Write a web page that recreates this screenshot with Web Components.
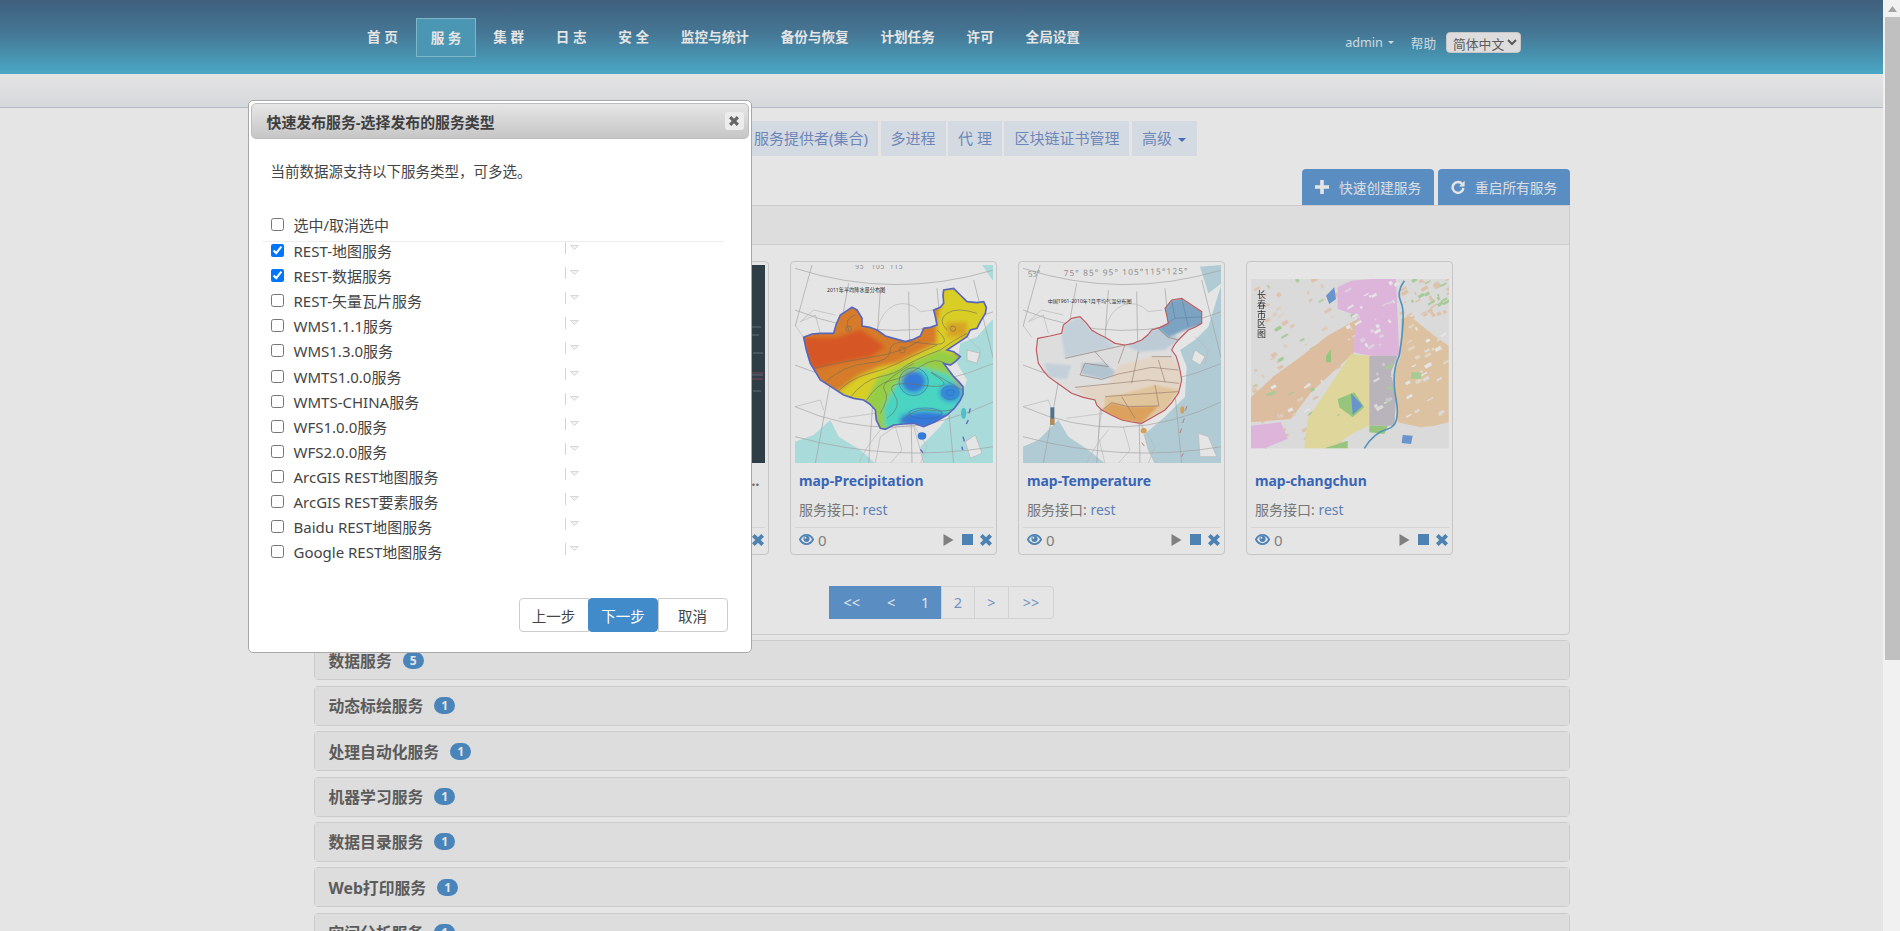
<!DOCTYPE html>
<html lang="zh-CN">
<head>
<meta charset="utf-8">
<title>iServer</title>
<style>
  html, body { margin: 0; height: 931px; overflow: hidden; background: #fff; }
  body { font-family: "Noto Sans", "Noto Sans CJK SC", sans-serif; font-size: 14.5px; }
</style>
</head>
<body>
<ims-app>
  <ims-header></ims-header>
  <ims-subbar></ims-subbar>
  <ims-content>
    <ims-tabs></ims-tabs>
    <ims-toolbar>
      <ims-action icon="plus" label="快速创建服务"></ims-action>
      <ims-action icon="refresh" label="重启所有服务"></ims-action>
    </ims-toolbar>
    <ims-panel open>
      <ims-cards>
        <ims-card iface="rest" hidden-title><ims-map slot="map" kind="dark"></ims-map></ims-card>
        <ims-card name="map-Precipitation" iface="rest"><ims-map slot="map" kind="rain"></ims-map></ims-card>
        <ims-card name="map-Temperature" iface="rest"><ims-map slot="map" kind="temp"></ims-map></ims-card>
        <ims-card name="map-changchun" iface="rest"><ims-map slot="map" kind="city"></ims-map></ims-card>
      </ims-cards>
      <ims-pager></ims-pager>
    </ims-panel>
    <ims-panel name="数据服务" count="5"></ims-panel>
    <ims-panel name="动态标绘服务" count="1"></ims-panel>
    <ims-panel name="处理自动化服务" count="1"></ims-panel>
    <ims-panel name="机器学习服务" count="1"></ims-panel>
    <ims-panel name="数据目录服务" count="1"></ims-panel>
    <ims-panel name="Web打印服务" count="1"></ims-panel>
    <ims-panel name="空间分析服务" count="1"></ims-panel>
  </ims-content>
  <ims-dialog>
    <ims-service-row label="REST-地图服务" checked></ims-service-row>
    <ims-service-row label="REST-数据服务" checked></ims-service-row>
    <ims-service-row label="REST-矢量瓦片服务"></ims-service-row>
    <ims-service-row label="WMS1.1.1服务"></ims-service-row>
    <ims-service-row label="WMS1.3.0服务"></ims-service-row>
    <ims-service-row label="WMTS1.0.0服务"></ims-service-row>
    <ims-service-row label="WMTS-CHINA服务"></ims-service-row>
    <ims-service-row label="WFS1.0.0服务"></ims-service-row>
    <ims-service-row label="WFS2.0.0服务"></ims-service-row>
    <ims-service-row label="ArcGIS REST地图服务"></ims-service-row>
    <ims-service-row label="ArcGIS REST要素服务"></ims-service-row>
    <ims-service-row label="Baidu REST地图服务"></ims-service-row>
    <ims-service-row label="Google REST地图服务"></ims-service-row>
  </ims-dialog>
</ims-app>

<script>
(function () {
  // small helper, every element just sets its shadow html once
  function define(name, render) {
    customElements.define(name, class extends HTMLElement {
      constructor() {
        super();
        this.attachShadow({ mode: "open" });
      }
      connectedCallback() {
        this.shadowRoot.innerHTML = render(this);
      }
    });
  }

  define("ims-app", () => `
    <style>
      :host { display: flex; width: 1900px; height: 931px; overflow: hidden; }
      .main { position: relative; width: 1883px; height: 931px; overflow: hidden; }
      .backdrop { position: absolute; inset: 0; background: rgba(0,0,0,.1); }
      .bar { width: 17px; background: #f1f1f1; display: flex; flex-direction: column; align-items: flex-end; }
      .up { height: 17px; width: 15px; display: flex; align-items: center; justify-content: center; }
      .thumb { width: 15px; height: 643px; background: #c0c0c0; }
    </style>
    <div class="main">
      <slot></slot>
      <div class="backdrop"></div>
      <slot name="top"></slot>
    </div>
    <div class="bar">
      <div class="up"><svg width="9" height="6"><path d="M4.5 0L9 6H0z" fill="#a3a3a3"/></svg></div>
      <div class="thumb"></div>
    </div>
  `);

  define("ims-header", () => {
    const items = ["首 页", "服 务", "集 群", "日 志", "安 全", "监控与统计", "备份与恢复", "计划任务", "许可", "全局设置"];
    return `
    <style>
      :host { display: flex; height: 74px; align-items: center; color: #fff;
        background: linear-gradient(#486a8c 0%, #4d85a6 45%, #52bbdc 100%); }
      nav { display: flex; margin-left: 352px; }
      a { padding: 0 15px; height: 39px; box-sizing: border-box; line-height: 38px; font-size: 13.6px; font-weight: 700;
        white-space: pre; margin-right: 1.8px; }
      a:first-child { margin-right: 3px; }
      a.on { background: #54a9c8; border: 1px solid #8ecae0; padding: 0 14px; }
      .user { margin-left: auto; margin-right: 362px; margin-top: 11px; display: flex; align-items: center; font-size: 12.6px; color: #e4f2f7; }
      .caret { width: 0; height: 0; border: 3px solid transparent; border-top-color: #e4f2f7; border-bottom: 0; margin: 0 0 0 5px; }
      .help { margin-left: 17px; margin-right: 10px; }
      select { width: 75px; height: 21px; font: 12.8px "Noto Sans CJK SC", sans-serif; color: #666; background: #f6f6f6;
        border: 1px solid #ddd; border-radius: 4px; padding: 0 0 0 2px; }
    </style>
    <nav>${items.map((t, i) => `<a class="${i === 1 ? "on" : ""}">${t}</a>`).join("")}</nav>
    <div class="user">admin<span class="caret"></span><span class="help">帮助</span>
      <select><option>简体中文</option></select></div>`;
  });

  define("ims-subbar", () => `
    <style>:host { display: block; height: 33px; border-bottom: 1px solid #ccd0d8;
      background: linear-gradient(#fefefe, #eef1f5); }</style>`);

  define("ims-content", () => `
    <style>:host { display: block; width: 1256px; margin-left: 314px; }</style><slot></slot>`);

  define("ims-tabs", () => {
    const tabs = ["服务提供者(集合)", "多进程", "代 理", "区块链证书管理"];
    return `
    <style>
      :host { display: flex; gap: 2.5px; margin: 13px 0 0 430px; height: 35px; }
      a { background: #edf3fb; color: #7a96cf; font-size: 15px; line-height: 34px; padding: 0 10px; white-space: pre; }
      a:last-child { padding-right: 11px; }
      i { display: inline-block; border: 4px solid transparent; border-top-color: #5177cc; border-bottom: 0; margin-left: 6px; vertical-align: 2px; }
    </style>
    ${tabs.map(t => `<a>${t}</a>`).join("")}<a>高级<i></i></a>`;
  });

  define("ims-toolbar", () => `
    <style>:host { display: flex; justify-content: flex-end; gap: 4px; margin-top: 13px; height: 36px; }</style><slot></slot>`);

  const actionIcons = {
    plus: `<path d="M5.2 0h3.6v5.2H14v3.6H8.8V14H5.2V8.8H0V5.2h5.2z" fill="#fff"/>`,
    refresh: `<path d="M11.2 4A5.4 5.4 0 1 0 12.4 8" fill="none" stroke="#fff" stroke-width="2.4"/><path d="M13.6.8v5.6H8z" fill="#fff"/>`
  };
  define("ims-action", el => `
    <style>
      :host { display: flex; align-items: center; width: 132px; height: 36px; box-sizing: border-box; padding-left: 13px;
        background: #659fd8; border-radius: 4px 4px 0 0; color: #f4f8ff; font-size: 13.7px; }
      svg { margin-right: 10px; flex: none; }
    </style>
    <svg width="14" height="14" viewBox="0 0 14 14">${actionIcons[el.getAttribute("icon")]}</svg>${el.getAttribute("label")}`);

  define("ims-panel", el => {
    const open = el.hasAttribute("open");
    const name = el.getAttribute("name");
    return `
    <style>
      :host { display: block; box-sizing: border-box; border: 1px solid #e2e2e2; border-radius: ${open ? "0 0 4px 4px" : "4px"};
        margin-top: ${open ? 0 : 5.4}px; background: #fff; }
      .head { height: 38px; background: #f6f6f6; display: flex; align-items: center; padding-left: 13.5px;
        font-size: 15.8px; font-weight: 700; color: #666; ${open ? "border-bottom: 1px solid #e6e6e6;" : ""} }
      .badge { margin-left: 11px; width: 21px; height: 17px; border-radius: 8.5px; background: #5295d0; color: #fff;
        font-size: 12px; line-height: 17px; text-align: center; }
    </style>
    <div class="head">${name ? `${name}<span class="badge">${el.getAttribute("count")}</span>` : ""}</div>
    ${open ? "<slot></slot>" : ""}`;
  });

  define("ims-cards", () => `
    <style>:host { display: flex; gap: 21px; padding: 16px 0 0 247px; }</style><slot></slot>`);

  define("ims-card", el => `
    <style>
      :host { display: block; width: 207px; height: 294px; box-sizing: border-box; border: 1px solid #ddd; border-radius: 4px;
        padding: 3px 3.5px 0; background: #fff; color: #848484; font-size: 14px; flex: none; }
      .pic { height: 198px; display: flex; align-items: center; }
      .name { margin: 5.5px 0 0; padding: 0 4.5px; height: 24px; line-height: 24px; font-size: 13.9px; font-weight: 700; color: #4171cc;
        white-space: nowrap; overflow: hidden; }
      .name.dots { text-align: right; color: #777; padding-right: 5px; }
      .iface { margin-top: 5px; padding: 0 4.5px; height: 24px; line-height: 24px; }
      .iface b { font-weight: 400; color: #6a90cc; }
      .foot { margin-top: 5px; border-top: 1px solid #eee; height: 24px; display: flex; align-items: center; padding: 0 1px 0 4.5px; }
      .num { margin-left: 4px; font-size: 15px; color: #909090; }
      .ops { margin-left: auto; display: flex; align-items: center; }
      .ops svg { display: block; }
    </style>
    <div class="pic"><slot name="map"></slot></div>
    <div class="name ${el.hasAttribute("hidden-title") ? "dots" : ""}">${el.getAttribute("name") || "…"}</div>
    <div class="iface">服务接口: <b>${el.getAttribute("iface")}</b></div>
    <div class="foot">
      <svg width="15" height="11" viewBox="0 0 15 11"><path d="M.9 5.500C2.600 2.200 4.800.9 7.500.9s4.900 1.300 6.600 4.600C12.400 8.800 10.200 10.100 7.500 10.100S2.600 8.800.9 5.500z" fill="none" stroke="#5691c7" stroke-width="1.800"/><circle cx="7.500" cy="4.800" r="3.100" fill="#5691c7"/><circle cx="6.400" cy="3.800" r="1" fill="#fff"/></svg>
      <span class="num">0</span>
      <div class="ops">
        <svg width="11" height="12" viewBox="0 0 11 12" style="margin-right:8px"><path d="M.5 0L10.5 6 .5 12z" fill="#8f8f8f"/></svg>
        <svg width="11" height="11" viewBox="0 0 11 11" style="margin-right:6.5px"><path d="M0 0h11v11H0z" fill="#5691c7"/></svg>
        <svg width="12" height="12" viewBox="0 0 14 14"><path d="M0 3.200L3.200 0 7 3.800 10.800 0 14 3.200 10.200 7 14 10.800 10.800 14 7 10.200 3.200 14 0 10.800 3.800 7z" fill="#5691c7"/></svg>
      </div>
    </div>`);

  // outlines are written in the pixel space of a 3x crop of the picture, hence the odd viewBoxes
  const rainEdge = "70,262 95,252 120,250 160,250 168,222 180,195 200,182 215,172 230,180 245,205 245,228 268,232 290,240 315,258 340,265 375,275 400,268 420,258 430,235 450,232 470,225 465,200 460,180 480,172 490,160 488,135 490,120 520,115 540,135 560,155 590,158 610,155 618,172 615,190 600,215 590,235 570,240 560,260 530,280 515,290 500,300 520,305 540,320 525,335 510,345 490,340 505,360 520,380 535,395 548,410 548,432 540,450 522,475 500,495 465,515 430,530 400,520 370,522 340,525 315,538 300,535 288,510 285,480 268,462 250,450 220,445 190,435 155,412 120,390 105,365 90,340 78,300";
  const tempEdge = "88,265 125,258 160,250 165,225 190,205 215,200 235,220 250,240 270,252 290,262 320,280 350,285 375,280 400,270 418,255 430,240 455,232 480,220 475,195 470,175 490,150 520,145 550,165 580,185 580,220 560,232 540,240 525,255 510,270 498,285 490,300 503,318 510,340 516,365 520,390 515,412 510,430 490,458 470,480 435,500 400,520 370,516 340,510 310,496 280,480 265,465 260,450 225,442 190,430 155,405 120,380 105,362 90,340 84,300";
  const graticule = `
    <g fill="none" stroke="#b5b5b5" stroke-width="2">
      <path d="M44 55Q340 150 640 60"/><path d="M44 180Q340 300 640 185"/><path d="M44 345Q340 470 640 340"/><path d="M44 470Q340 600 640 455"/><path d="M44 560Q340 640 640 590"/>
      <path d="M95 45L44 230"/><path d="M205 100L105 640"/><path d="M300 120L265 640"/><path d="M385 125L395 640"/><path d="M470 115L520 640"/><path d="M580 90L640 330"/>
    </g>`;
  const borders = `
    <path d="M290 240Q305 180 345 165T420 185L462 180M44 225L70 262M120 250L105 195 60 215 100 180 165 195M175 505L285 490M44 470L120 450 130 480M300 540Q250 600 235 640M345 530L365 600 330 640M400 525L440 590 420 640M560 260L600 300 590 340" fill="none" stroke="#cfcfcf" stroke-width="2"/>`;

  const maps = {
    dark: () => `<svg viewBox="0 0 198 198"><rect width="198" height="198" fill="#34444f"/>
      <g stroke="#8a949c" stroke-width=".7"><path d="M182 62h12M184 70h8M186 88h10M184 110h12M186 126h8"/></g>
      <path d="M180 108h16M182 114h14" stroke="#a05a5a" stroke-width=".8"/></svg>`,
    rain: () => `<svg viewBox="44 45 594 594">
      <defs>
        <clipPath id="cn"><polygon points="${rainEdge}"/></clipPath>
        <filter id="soft" x="-10%" y="-10%" width="120%" height="120%"><feGaussianBlur stdDeviation="7"/></filter>
      </defs>
      <rect x="44" y="45" width="594" height="594" fill="#fff"/>
      <g fill="#bcf4f2">
        <polygon points="44,640 44,575 100,555 150,510 175,560 240,600 285,640"/>
        <polygon points="540,280 590,260 640,205 640,640 430,640 420,590 470,540 530,470 560,390 530,340"/>
        <polygon points="605,45 640,45 640,95"/>
      </g>
      <g fill="#fff" stroke="#c9c9c9" stroke-width="2">
        <polygon points="285,640 300,560 345,530 400,530 420,600 430,640"/>
        <polygon points="560,300 600,310 590,340 560,330"/><polygon points="555,575 585,555 605,610 570,625"/>
      </g>
      ${borders}
      ${graticule}
      <g clip-path="url(#cn)">
        <g filter="url(#soft)">
          <rect x="44" y="45" width="594" height="594" fill="#ef8a2d"/>
          <polygon points="60,262 170,262 240,238 315,290 270,322 170,340 95,360" fill="#f0602c"/>
          <polygon points="165,432 232,380 300,350 352,340 470,280 470,220 490,105 630,145 630,250 480,330 300,470 250,470" fill="#f2e62c"/>
          <polygon points="498,218 560,215 560,262 500,262" fill="#f0b62c"/>
          <polygon points="258,450 292,382 370,345 480,298 545,320 525,390 555,420 545,470 500,510 430,540 300,545" fill="#a6e650"/>
          <polygon points="312,470 345,405 420,350 500,372 555,420 545,470 500,510 420,540 312,530" fill="#52ecd8"/>
          <ellipse cx="400" cy="395" rx="36" ry="33" fill="#3a88f2"/>
          <ellipse cx="510" cy="428" rx="32" ry="27" fill="#3a98f2"/>
          <ellipse cx="435" cy="510" rx="78" ry="26" fill="#3a88f2"/>
        </g>
        <g fill="none" stroke="#7d7a68" stroke-width="1.800">
          <path d="M100 355Q180 335 270 322T420 272"/>
          <path d="M130 400Q190 345 260 340T330 300 430 280 470 240"/>
          <path d="M165 432Q210 385 262 372T352 340 470 285"/>
          <path d="M210 442Q250 390 300 380T370 352 480 300"/>
          <path d="M258 452Q290 400 330 392T420 350 500 345"/>
          <path d="M300 490Q330 440 312 420T400 340"/>
          <path d="M320 505Q370 470 340 430T420 405 470 380 545 420"/>
          <path d="M360 520Q400 470 450 480T540 470"/>
          <path d="M500 240Q470 210 500 190T590 190M205 240Q190 205 225 195M480 300Q520 270 560 250"/>
          <circle cx="205" cy="236" r="8"/><circle cx="366" cy="300" r="9"/><circle cx="518" cy="236" r="8"/>
          <ellipse cx="400" cy="395" rx="44" ry="42" stroke="#3c78c8"/>
          <ellipse cx="510" cy="428" rx="26" ry="20" stroke="#3c78c8"/>
          <ellipse cx="510" cy="428" rx="12" ry="9" stroke="#3c78c8"/>
          <ellipse cx="435" cy="490" rx="50" ry="16" stroke="#3c78c8"/>
        </g>
      </g>
      <polygon points="${rainEdge}" fill="none" stroke="#6272d4" stroke-width="5"/>
      <ellipse cx="425" cy="558" rx="13" ry="11" fill="#3a88f2"/>
      <ellipse cx="550" cy="490" rx="8" ry="17" fill="#57d6e0"/>
      <path d="M570 475l-4 15M564 510l-6 12M548 560l4 14M420 598l8 10M545 590l2 10" stroke="#6670d6" stroke-width="4"/>
      <text x="140" y="125" font-size="15.5" fill="#333">2011年平均降水量分布图</text>
      <text x="225" y="58" font-size="20" fill="#999" letter-spacing="2" xml:space="preserve">95   105  115</text>
    </svg>`,
    temp: () => `<svg viewBox="44 45 594 594">
      <defs>
        <clipPath id="cnt"><polygon points="${tempEdge}"/></clipPath>
        <filter id="soft2" x="-10%" y="-10%" width="120%" height="120%"><feGaussianBlur stdDeviation="3"/></filter>
      </defs>
      <rect x="44" y="45" width="594" height="594" fill="#fff"/>
      <g fill="#c4e2ed">
        <polygon points="44,640 44,590 90,570 150,510 180,560 240,600 290,640"/>
        <polygon points="515,300 560,270 600,230 640,100 640,640 360,640 400,560 470,500 530,440 535,350"/>
        <polygon points="575,50 640,45 640,100 600,130"/>
      </g>
      <g fill="#fff" stroke="#cfcfcf" stroke-width="2">
        <polygon points="290,640 270,560 280,480 400,525 420,600 440,640"/>
        <polygon points="560,300 590,320 575,345 550,330"/><polygon points="570,550 600,560 625,620 575,620"/>
      </g>
      ${borders}
      ${graticule}
      <g clip-path="url(#cnt)">
        <rect x="44" y="45" width="594" height="594" fill="#f7f7f7"/>
        <g filter="url(#soft2)">
          <polygon points="165,225 215,200 250,240 290,262 320,290 260,305 170,325 160,260" fill="#dbe8f2"/>
          <polygon points="108,340 190,345 175,388 120,382" fill="#dbe8f2"/>
          <polygon points="350,285 430,240 490,230 510,270 470,300 390,305" fill="#d3e3f0"/>
          <polygon points="430,205 490,150 520,145 585,185 585,225 530,240 480,262 450,235" fill="#8cb6da"/>
          <polygon points="220,340 290,340 330,372 280,388 220,372" fill="#c8dbe9"/>
          <polygon points="330,345 430,320 490,320 525,370 512,430 470,480 400,520 280,485 200,412 300,402" fill="#fdeedd"/>
          <polygon points="290,440 340,432 440,405 512,420 470,480 400,520 340,510 285,485" fill="#fadcae"/>
          <polygon points="280,482 310,458 360,470 450,468 400,520 340,512" fill="#f5b468"/>
        </g>
        <g fill="none" stroke="#a0857a" stroke-width="1.800">
          <path d="M170 325L260 305 350 285M260 305L300 350 230 340 215 375 280 388 330 372M330 372L430 352 510 360M200 412L300 402 420 390 512 400"/>
          <path d="M340 440L380 505M440 405L452 470M390 305L370 400M450 330L470 395M290 440L400 432 510 425M450 235L480 262 510 270M350 285L330 340M280 482L310 458 360 470 450 468M430 320L490 320"/>
          <path d="M490 150L500 205 450 235M520 145L540 230M585 200L500 205" stroke="#6c8eb0"/>
        </g>
      </g>
      <polygon points="${tempEdge}" fill="none" stroke="#d4646a" stroke-width="3.500"/>
      <ellipse cx="406" cy="542" rx="9" ry="8" fill="#f0b060"/>
      <ellipse cx="522" cy="480" rx="6" ry="11" fill="#f0b060"/>
      <path d="M536 468l-5 14M528 505l-5 14M520 535l-5 14M400 578l8 10M525 610l-5 10" stroke="#d08a8a" stroke-width="3"/>
      <rect x="126" y="472" width="12" height="52" fill="#5d7f9c"/><rect x="126" y="506" width="12" height="18" fill="#d89a50"/>
      <text x="166" y="76" font-size="25" fill="#a0a0a0" textLength="372" transform="rotate(-1 300 76)">75° 85° 95° 105°115°125°</text>
      <text x="60" y="82" font-size="24" fill="#a0a0a0" transform="rotate(-8 60 82)">53°</text>
      <text x="118" y="160" font-size="15.3" fill="#333">中国1961-2010年1月平均气温分布图</text>
    </svg>`,
    city: () => {
      // speckle so the land-use patches are not flat
      let s = 7;
      const next = m => (s = (s * 73 + 41) % 1009) % m;
      const specks = (count, colors, x, y, w, h) => {
        let out = "";
        for (let i = 0; i < count; i++) {
          const px = x + next(w), py = y + next(h);
          out += `<rect x="${px}" y="${py}" width="${5 + next(18)}" height="${4 + next(8)}" fill="${colors[i % colors.length]}" transform="rotate(-30 ${px} ${py})"/>`;
        }
        return out;
      };
      return `<svg viewBox="60 360 594 508" style="display:block">
      <defs><filter id="soft3"><feGaussianBlur stdDeviation="1.2"/></filter></defs>
      <rect x="60" y="360" width="594" height="508" fill="#f3f3f3"/>
      <g filter="url(#soft3)">
        ${specks(120, ["#f7d9bf", "#f7d9bf", "#f9e2cf", "#b9e2a6"], 60, 362, 300, 500)}
        ${specks(40, ["#f7d9bf", "#f7d9bf", "#b9e2a6"], 500, 362, 150, 120)}
        <polygon points="60,740 60,715 130,650 200,600 290,530 380,480 370,580 240,700 180,780 60,790" fill="#f7d3b2"/>
        <polygon points="510,480 535,470 560,490 610,530 653,560 653,790 610,800 570,805 500,790 490,640 510,590" fill="#f7d9b4"/>
        <polygon points="320,385 360,365 420,360 495,360 505,590 420,590 365,580 380,470 320,450" fill="#f6caf4"/>
        <polygon points="60,800 150,790 170,840 100,868 60,868" fill="#f6caf4"/>
        <polygon points="360,585 415,590 415,800 370,820 300,868 220,868 230,780" fill="#f9efae"/>
        <polygon points="415,590 500,590 480,640 495,720 490,800 415,800" fill="#cfc9d2"/>
        ${specks(30, ["#f8e8f8", "#ffffff"], 340, 370, 150, 200)}
        ${specks(30, ["#ffffff", "#fbeedd", "#f3f3f3"], 520, 500, 125, 280)}
        ${specks(16, ["#f7e6d6", "#ffffff", "#b9e2a6"], 90, 640, 240, 130)}
        ${specks(14, ["#e4e0e6", "#f3f3f3", "#b9e2a6"], 425, 600, 60, 190)}
        <polygon points="320,720 370,700 400,745 365,775 325,745" fill="#a9dc8c"/>
        <polygon points="360,702 395,740 365,768" fill="#74a6e4"/>
        <polygon points="285,410 310,385 315,420 295,435" fill="#74a6e4"/>
        <polygon points="515,828 545,830 540,855 512,852" fill="#74a6e4"/>
        <polygon points="285,590 300,570 300,610 285,610" fill="#a9dc8c"/>
        <polygon points="415,800 470,800 460,825 415,820" fill="#a9dc8c"/>
        <polygon points="540,640 570,640 570,660 540,660" fill="#b9e2a6"/>
        <polygon points="280,868 350,845 350,868" fill="#a9dc8c"/>
        <path d="M520 365Q495 400 510 430T505 590Q480 640 495 720T470 810 400 868" fill="none" stroke="#5fa4cc" stroke-width="5"/>
      </g>
      <text x="78 78 78 78 78" y="418 447 476 505 534" font-size="27" fill="#333">长春市区图</text>
    </svg>`;
    }
  };

  define("ims-map", el => `
    <style>:host { display: block; width: 198px; } svg { display: block; width: 198px; }</style>${maps[el.getAttribute("kind")]()}`);

  define("ims-pager", () => {
    const items = [["<<", 45], ["<", 36], ["1", 34], ["2", 33.5], [">", 35.5], [">>", 45.5]];
    return `
    <style>
      :host { display: flex; justify-content: center; margin-top: 31px; padding-bottom: 15px; }
      a { box-sizing: border-box; height: 33px; line-height: 31px; text-align: center; border: 1px solid #eaeaea; margin-left: -1px;
        color: #7fa4d4; font-size: 14.5px; background: #fff; }
      a.on { background: #659fd8; color: #fff; border-color: #659fd8; }
      a:first-child { border-radius: 4px 0 0 4px; }
      a:last-child { border-radius: 0 4px 4px 0; }
    </style>
    ${items.map((t, i) => `<a class="${i < 3 ? "on" : ""}" style="width:${t[1]}px">${t[0].replace(/</g, "&lt;").replace(/>/g, "&gt;")}</a>`).join("")}`;
  });

  define("ims-dialog", el => {
    el.slot = "top";
    return `
    <style>
      :host { position: absolute; left: 247.5px; top: 100px; width: 504px; height: 553px; box-sizing: border-box;
        background: #fff; border: 1px solid #a8a8a8; border-radius: 5px; padding: 2px; color: #444; font-size: 15px; }
      .title { height: 36px; box-sizing: border-box; border: 1px solid #bdbdbd; border-radius: 5px;
        background: linear-gradient(#e6e6e6, #c6c6c6); display: flex; align-items: center; padding: 0 4px 0 15px;
        font-size: 14.9px; font-weight: 700; color: #3f3f3f; }
      .x { margin-left: auto; width: 19px; height: 18px; background: #ececec; border-radius: 3px; display: flex; align-items: center; justify-content: center; }
      .tip { margin: 22px 0 0 20px; line-height: 20px; font-size: 14.5px; }
      .all { margin: 31px 0 0 20px; display: flex; align-items: center; height: 24px; }
      .all input { margin: 0 10px 0 0; }
      hr { margin: 5px 25px 0 11px; border: 0; border-top: 1px solid #eee; }
      .rows { margin: -4px 0 0 20px; }
      .btns { display: flex; justify-content: flex-end; margin: 34px 21px 0 0; }
      .btns button { width: 70px; height: 34px; padding: 0; font: 14.5px "Noto Sans CJK SC", sans-serif; color: #444; background: #fff; border: 1px solid #ccc; margin-left: -.5px; }
      .btns button:first-child { border-radius: 4px 0 0 4px; }
      .btns button:last-child { border-radius: 0 4px 4px 0; }
      .btns .go { background: #428bca; color: #fff; border-color: #428bca; border-radius: 4px; }
    </style>
    <div class="title">快速发布服务-选择发布的服务类型
      <span class="x"><svg width="10" height="10" viewBox="0 0 14 14"><path d="M0 3.200L3.200 0 7 3.800 10.800 0 14 3.200 10.200 7 14 10.800 10.800 14 7 10.200 3.200 14 0 10.800 3.800 7z" fill="#666"/></svg></span>
    </div>
    <div class="tip">当前数据源支持以下服务类型，可多选。</div>
    <label class="all"><input type="checkbox">选中/取消选中</label>
    <hr>
    <div class="rows"><slot></slot></div>
    <div class="btns"><button>上一步</button><button class="go">下一步</button><button>取消</button></div>`;
  });

  define("ims-service-row", el => `
    <style>
      :host { display: flex; align-items: center; height: 25.1px; color: #444; font-size: 15px; }
      input { margin: 0 10px 0 0; flex: none; }
      span { width: 271px; white-space: nowrap; }
      i { display: block; width: 1px; height: 12px; background: #d4d4d4; margin: -5px 4px 0 0; }
      svg { margin-top: -6px; }
    </style>
    <input type="checkbox" ${el.hasAttribute("checked") ? "checked" : ""}>
    <span>${el.getAttribute("label")}</span><i></i>
    <svg width="9" height="5" viewBox="0 0 9 5"><path d="M.5.5h8L4.5 4.500z" fill="#f2f2f2" stroke="#cfcfcf" stroke-width=".8"/></svg>`);
})();
</script>
</body>
</html>
